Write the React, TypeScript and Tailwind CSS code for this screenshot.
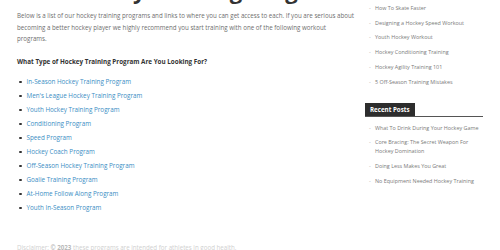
const programs = [
  'In-Season Hockey Training Program',
  "Men's League Hockey Training Program",
  'Youth Hockey Training Program',
  'Conditioning Program',
  'Speed Program',
  'Hockey Coach Program',
  'Off-Season Hockey Training Program',
  'Goalie Training Program',
  'At-Home Follow Along Program',
  'Youth In-Season Program',
]

const popular = [
  'How To Skate Faster',
  'Designing a Hockey Speed Workout',
  'Youth Hockey Workout',
  'Hockey Conditioning Training',
  'Hockey Agility Training 101',
  '5 Off-Season Training Mistakes',
]

const recent = [
  'What To Drink During Your Hockey Game',
  'Core Bracing: The Secret Weapon For Hockey Domination',
  'Doing Less Makes You Great',
  'No Equipment Needed Hockey Training',
]

function SideList({ items }: { items: string[] }) {
  return (
    <ul>
      {items.map((item) => (
        <li key={item} className="flex py-[2.9px] text-[5.4px] leading-[9px] text-[#7a7a7a]">
          <span className="w-[10px] shrink-0 pl-[4px] text-[#aaa]">-</span>
          <span className="w-[106px]">{item}</span>
        </li>
      ))}
    </ul>
  )
}

export default function App() {
  return (
    <div
      className="flex h-[250px] w-[500px] overflow-hidden bg-white"
      style={{ fontFamily: '"Open Sans", "Liberation Sans", sans-serif' }}
    >
      <main className="w-[352px] shrink-0 pl-[17px]">
        <h1 className="mt-[-23px] whitespace-nowrap text-[22px] font-bold leading-[26px] text-[#333]">
          Our Hockey Training Programs
        </h1>
        <p className="mt-[7px] w-[340px] text-[6.2px] leading-[11.5px] text-[#6e6e6e]">
          Below is a list of our hockey training programs and links to where you can get access to each. If you are serious about
          becoming a better hockey player we highly recommend you start training with one of the following workout programs.
        </p>
        <h2 className="mt-[11px] text-[6.3px] font-bold leading-[11px] text-[#333]">
          What Type of Hockey Training Program Are You Looking For?
        </h2>
        <ul className="mt-[8.5px]">
          {programs.map((p) => (
            <li key={p} className="flex items-center text-[6.3px] leading-[14px]">
              <span className="ml-[2px] mr-[5px] h-[2.5px] w-[2.5px] rounded-full bg-[#333]" />
              <span className="text-[#3b8ec4]">{p}</span>
            </li>
          ))}
        </ul>
        <p className="mt-[28px] whitespace-nowrap text-[6.2px] leading-[10px] text-[#d0d0d0]">
          Disclaimer: <span className="font-bold text-[#b8b8b8]">© 2023</span> these programs are intended for athletes in good health.
        </p>
      </main>
      <aside className="ml-[13px] w-[118px] shrink-0 pt-[1px]">
        <SideList items={popular} />
        <div className="mt-[13px] flex border-b border-[#555]">
          <div className="h-[13px] bg-[#2d2d2d] px-[5px] text-[6.2px] font-bold leading-[13px] text-white">
            Recent Posts
          </div>
        </div>
        <div className="mt-[4px]">
          <SideList items={recent} />
        </div>
      </aside>
    </div>
  )
}
